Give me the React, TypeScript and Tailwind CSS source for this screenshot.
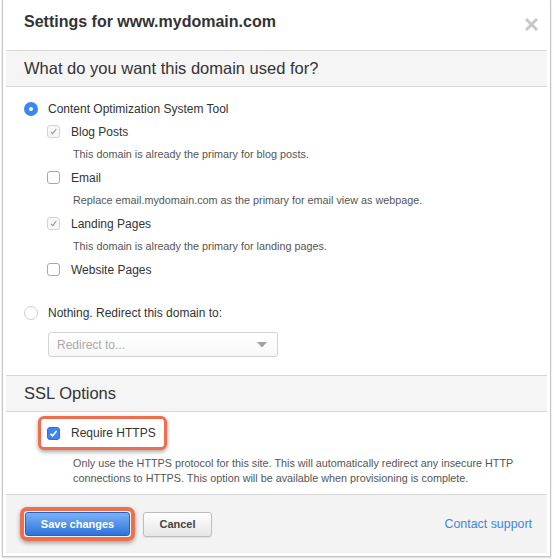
import React from "react";

function Check({ state }: { state: "off" | "muted" | "on" }) {
  if (state === "on") {
    return (
      <span className="flex h-[13px] w-[13px] shrink-0 items-center justify-center rounded-[3px] border border-[#2a70dc] bg-[#3b86f0]">
        <svg width="9" height="9" viewBox="0 0 9 9">
          <path d="M1.5 4.8 L3.6 6.8 L7.6 2" fill="none" stroke="#fff" strokeWidth="1.6" />
        </svg>
      </span>
    );
  }
  return (
    <span
      className={
        "flex h-[13px] w-[13px] shrink-0 items-center justify-center rounded-[3px] border " +
        (state === "muted" ? "border-[#d4d4d4] bg-[#f7f7f7]" : "border-[#a8a8a8] bg-white")
      }
    >
      {state === "muted" && (
        <svg width="9" height="9" viewBox="0 0 9 9">
          <path d="M2 4.8 L3.8 6.6 L7.2 2.2" fill="none" stroke="#9a9a9a" strokeWidth="1.1" />
        </svg>
      )}
    </span>
  );
}

function Radio({ on }: { on?: boolean }) {
  return on ? (
    <span className="flex h-[14px] w-[14px] items-center justify-center rounded-full bg-[#3a87f2]">
      <span className="h-[4px] w-[4px] rounded-full bg-white" />
    </span>
  ) : (
    <span className="h-[14px] w-[14px] rounded-full border border-[#cfcfcf] bg-white" />
  );
}

function Option({ label, state }: { label: string; state: "off" | "muted" | "on" }) {
  return (
    <div className="flex h-[23px] items-center gap-[11px] pl-[41px]">
      <Check state={state} />
      <span className="text-[12px] text-[#333]">{label}</span>
    </div>
  );
}

function Hint({ children }: { children: React.ReactNode }) {
  return <div className="flex h-[23px] items-center pl-[67px] text-[10.8px] text-[#555]">{children}</div>;
}

function Band({ title }: { title: string }) {
  return (
    <div className="flex h-[37px] items-center border-y border-[#d8d8d8] bg-[#f5f5f5] pl-[18px] text-[16.5px] text-[#333]">
      {title}
    </div>
  );
}

export default function App() {
  return (
    <div className="h-[560px] w-[554px] bg-white pl-[2px]" style={{ fontFamily: '"Liberation Sans", Arial, sans-serif' }}>
      <div className="w-[549px] border-x border-b border-[#c4c4c4] px-[3px] pb-[3px] shadow-[0_1px_2px_rgba(0,0,0,0.15)]">
        <div className="flex h-[50px] items-start justify-between pl-[18px] pr-[9px] pt-[12px]">
          <h1 className="text-[16px] font-bold leading-[20px] text-[#333]">Settings for www.mydomain.com</h1>
          <svg width="13" height="13" viewBox="0 0 13 13" className="mt-[6px]">
            <path d="M2 2 L11 11 M11 2 L2 11" stroke="#c8c8c8" strokeWidth="3" strokeLinecap="square" />
          </svg>
        </div>

        <Band title="What do you want this domain used for?" />

        <div className="pt-[10px] pb-[18px]">
          <div className="flex h-[23px] items-center gap-[10px] pl-[18px]">
            <Radio on />
            <span className="text-[12px] text-[#333]">Content Optimization System Tool</span>
          </div>
          <Option label="Blog Posts" state="muted" />
          <Hint>This domain is already the primary for blog posts.</Hint>
          <Option label="Email" state="off" />
          <Hint>Replace email.mydomain.com as the primary for email view as webpage.</Hint>
          <Option label="Landing Pages" state="muted" />
          <Hint>This domain is already the primary for landing pages.</Hint>
          <Option label="Website Pages" state="off" />

          <div className="mt-[20px] flex h-[23px] items-center gap-[10px] pl-[18px]">
            <Radio />
            <span className="text-[12px] text-[#333]">Nothing. Redirect this domain to:</span>
          </div>
          <div className="ml-[42px] mt-[8px] flex h-[25px] w-[230px] items-center justify-between rounded-[3px] border border-[#d4d4d4] bg-gradient-to-b from-white to-[#f8f8f8] pl-[8px] pr-[10px]">
            <span className="text-[12px] text-[#aaa]">Redirect to...</span>
            <svg width="10" height="6" viewBox="0 0 10 6">
              <path d="M0 0 L10 0 L5 5.5 Z" fill="#a0a0a0" />
            </svg>
          </div>
        </div>

        <Band title="SSL Options" />

        <div className="pt-[4px] pb-[8px]">
          <div className="ml-[32px] flex h-[34px] w-fit items-center gap-[11px] whitespace-nowrap rounded-[6px] border-[3px] border-[#ee6e4e] bg-white pl-[6px] pr-[8px] shadow-[0_2px_4px_rgba(0,0,0,0.35)]">
            <Check state="on" />
            <span className="text-[12px] text-[#333]">Require HTTPS</span>
          </div>
          <p className="mt-[6px] pl-[67px] pr-[20px] text-[10.8px] leading-[15px] text-[#555]">
            Only use the HTTPS protocol for this site. This will automatically redirect any insecure HTTP
            connections to HTTPS. This option will be available when provisioning is complete.
          </p>
        </div>

        <div className="flex h-[59px] items-center justify-between border-t border-[#d8d8d8] bg-[#f3f3f3] pl-[14px] pr-[15px]">
          <div className="flex items-center gap-[8px]">
            <div className="rounded-[7px] border-[4px] border-[#ee6e4e] p-[1px] shadow-[0_2px_4px_rgba(0,0,0,0.35)]">
              <button className="flex h-[24px] w-[105px] items-center justify-center rounded-[3px] border border-[#2a62c0] bg-gradient-to-b from-[#79b2f5] to-[#2f72dc] text-[11px] font-bold text-white">
                Save changes
              </button>
            </div>
            <button className="flex h-[25px] w-[69px] items-center justify-center rounded-[3px] border border-[#bdbdbd] bg-gradient-to-b from-white to-[#e6e6e6] text-[11px] font-bold text-[#444] shadow-[0_1px_1px_rgba(0,0,0,0.08)]">
              Cancel
            </button>
          </div>
          <a className="text-[12.4px] text-[#3a89e0]">Contact support</a>
        </div>
      </div>
    </div>
  );
}
